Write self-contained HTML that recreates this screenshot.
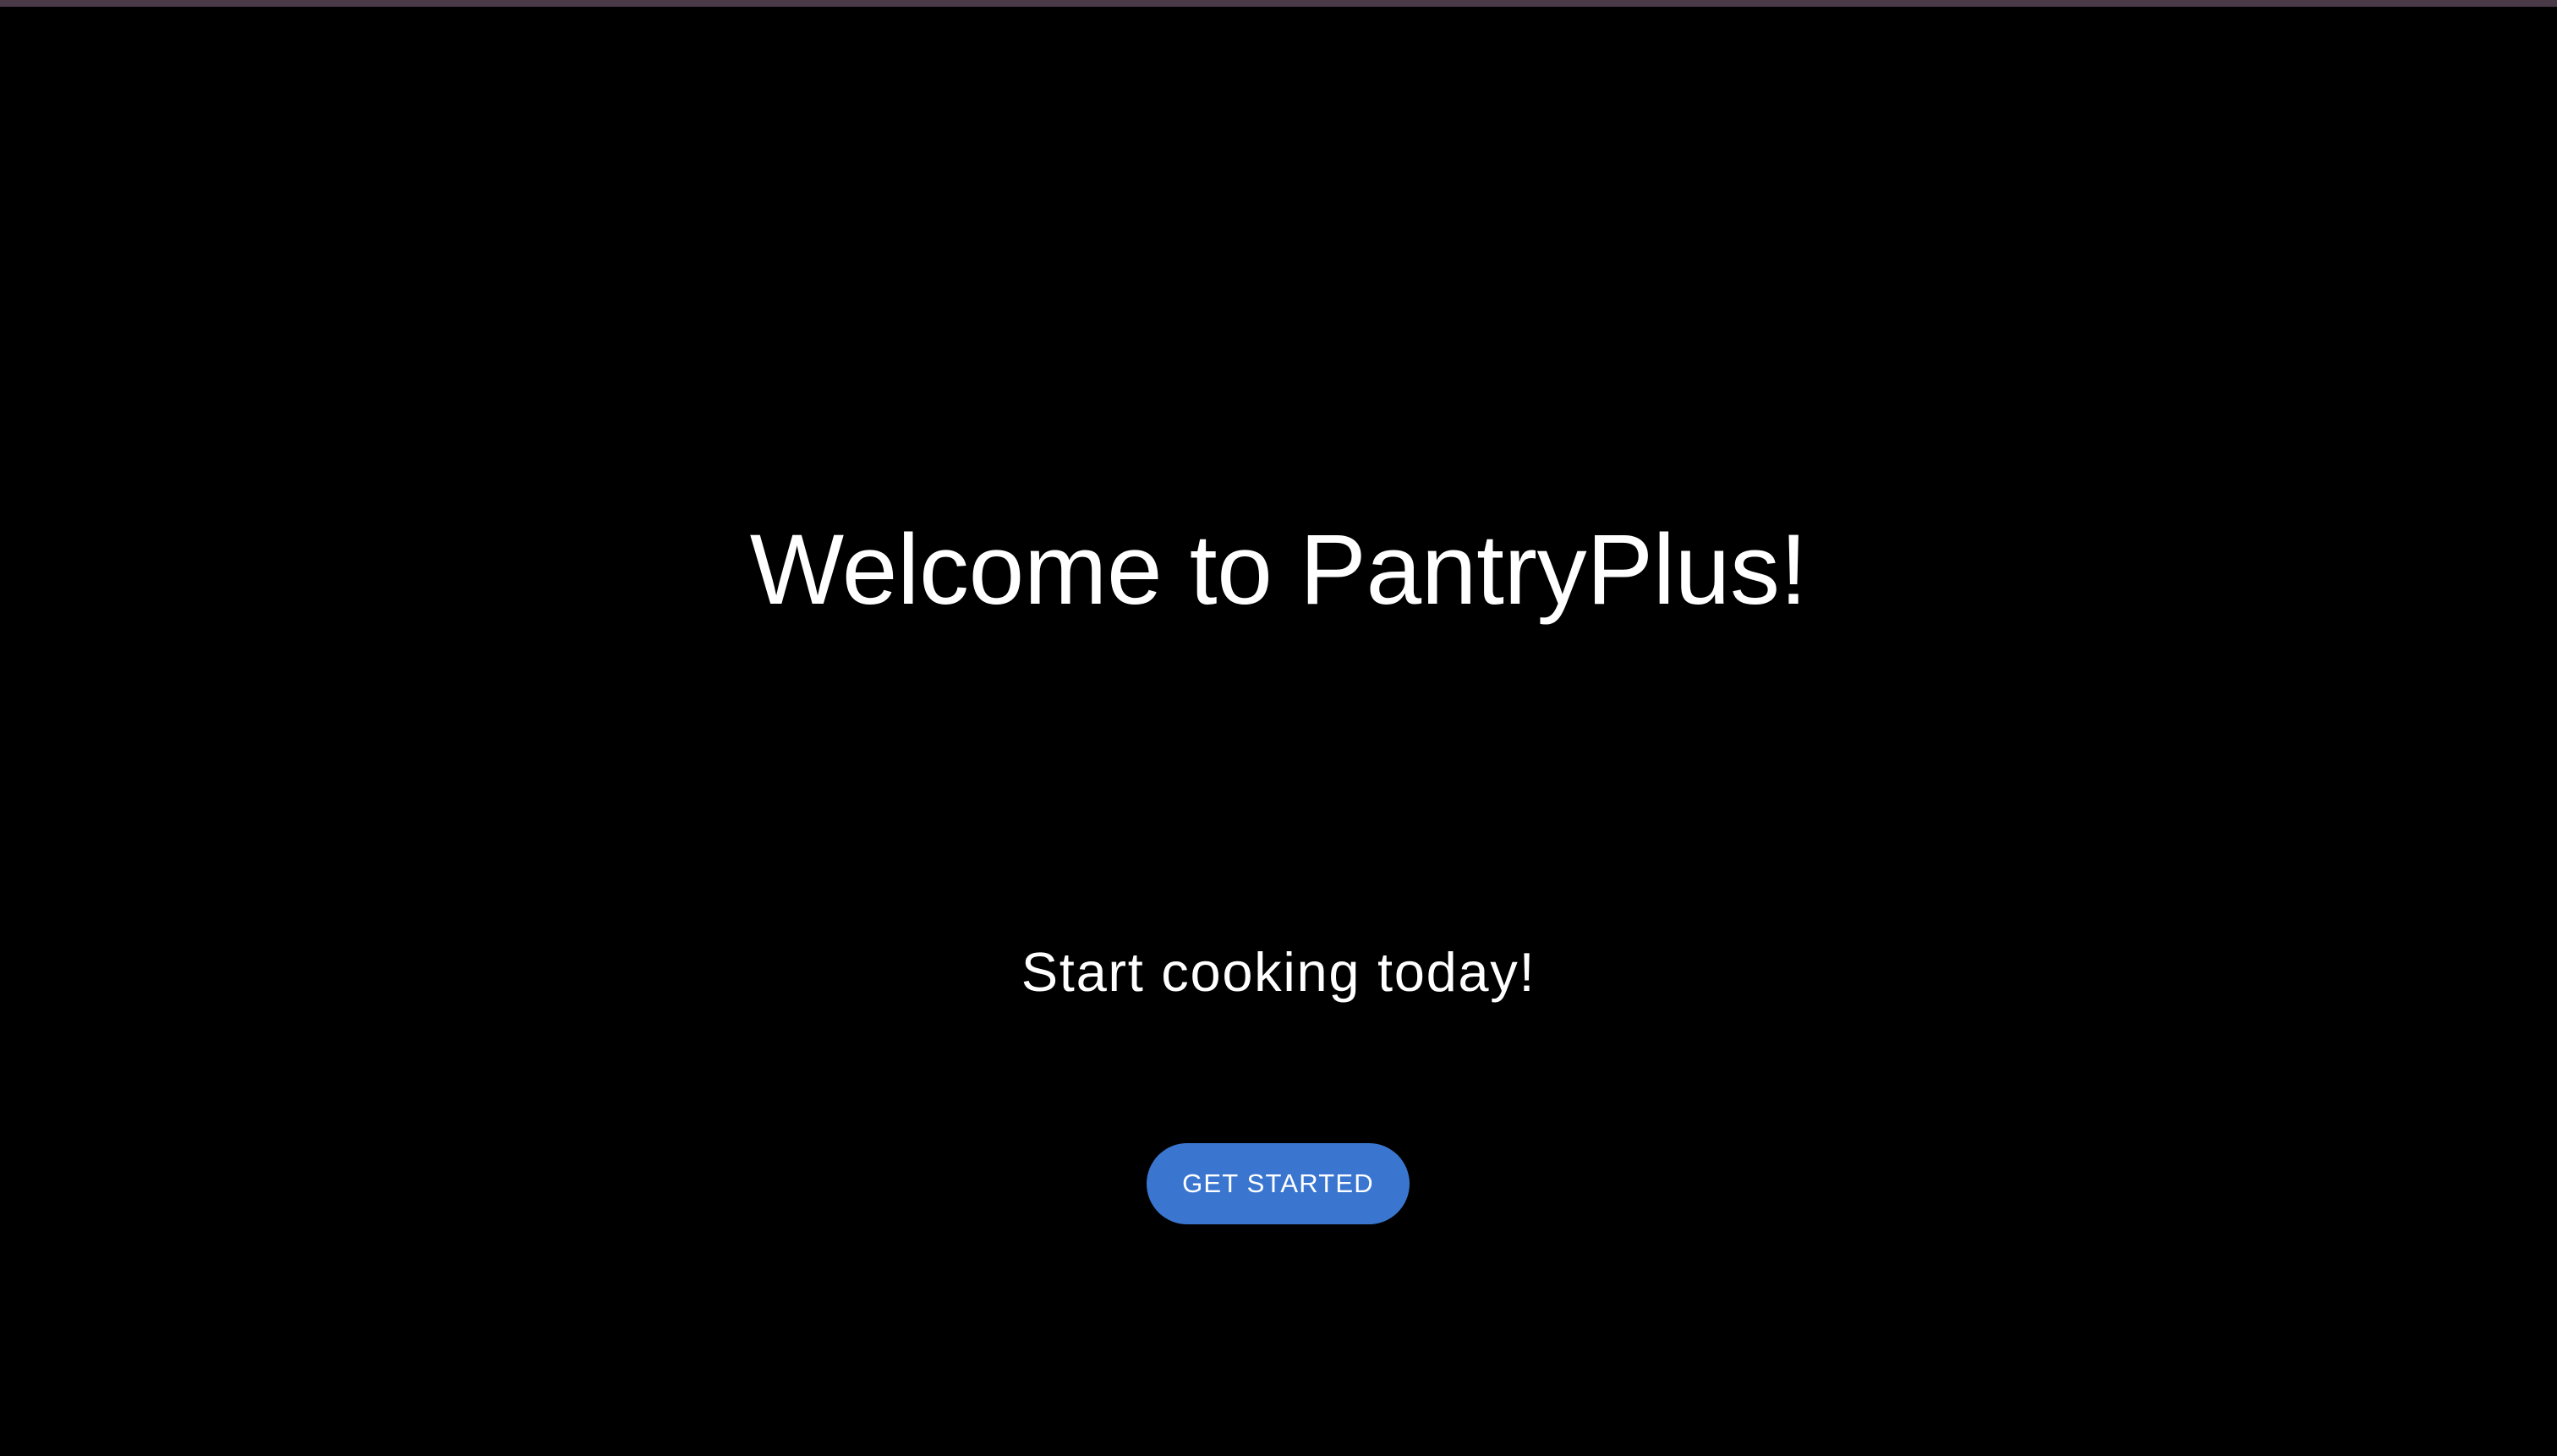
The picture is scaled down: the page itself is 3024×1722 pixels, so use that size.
<!DOCTYPE html>
<html><head><style>
html,body{margin:0;padding:0;background:#000;width:3024px;height:1722px;overflow:hidden}
body{position:relative;font-family:"Liberation Sans",Helvetica,Arial,sans-serif;color:#fff}
.bar{position:absolute;left:0;top:0;width:3024px;height:8px;background:#4a3a48}
.t{position:absolute;left:0;width:3024px;text-align:center;line-height:1;white-space:nowrap}
.h1{top:615px;font-size:118px;font-weight:300;letter-spacing:-0.3px}
.h2{top:1117px;font-size:65px;letter-spacing:1.7px}
.btn{position:absolute;left:1356px;top:1352px;width:311px;height:96px;border-radius:48px;background:#3a76cf;display:flex;align-items:center;justify-content:center;font-size:31px;color:#fff;letter-spacing:1.2px}
</style></head><body>
<div class="bar"></div>
<div class="t h1">Welcome to PantryPlus!</div>
<div class="t h2">Start cooking today!</div>
<div class="btn">GET STARTED</div>
</body></html>
